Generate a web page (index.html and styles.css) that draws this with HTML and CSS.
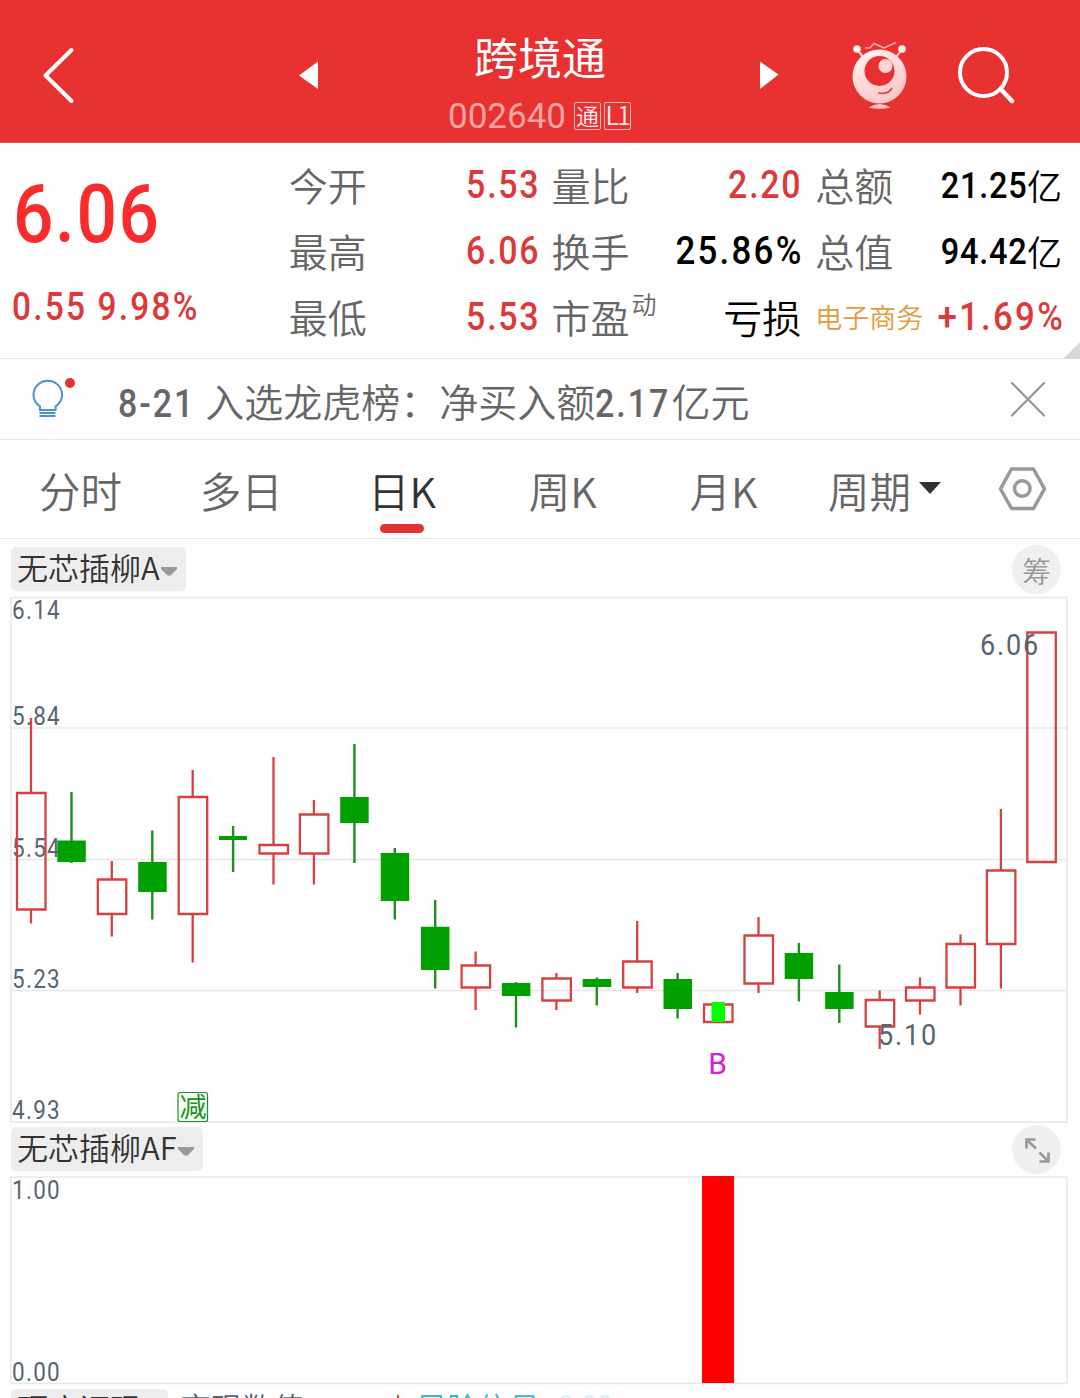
FILE: index.html
```html
<!DOCTYPE html>
<html lang="zh-CN">
<head>
<meta charset="utf-8">
<title>跨境通 002640</title>
<link rel="stylesheet" href="styles.css">
</head>
<body>
<div class="screen">
  <header class="topbar">
    <svg class="ico" width="48" height="72" viewBox="34 40 48 72"><path d="M71.500 50 45.500 75.500 71.500 101" fill="none" stroke="#fff" stroke-width="4" stroke-linecap="round" stroke-linejoin="round"/></svg>
    <svg class="ico prev" width="22" height="30" viewBox="298 60 22 30"><path d="M299 75.500 318 61.500V89z" fill="#fff"/></svg>
    <div class="stock">
      <h1 class="name">跨境通</h1>
      <div class="code"><span class="digits">002640</span><span class="badge">通</span><span class="badge latin">L1</span></div>
    </div>
    <svg class="ico next" width="22" height="30" viewBox="758 60 22 30"><path d="M778.500 74.500 760 61.500V89z" fill="#fff"/></svg>
    <svg class="ico robot" width="60" height="72" viewBox="850 39 60 72">
      <defs><linearGradient id="ball" x1="0" y1="0" x2=".7" y2="1"><stop offset="0" stop-color="#fff"/><stop offset=".45" stop-color="#ffdcdc"/><stop offset="1" stop-color="#ffc4c4"/></linearGradient></defs>
      <path d="M857 49.500 864 58M902 49.500 896 57" stroke="#ffd5d5" stroke-width="2"/>
      <circle cx="857" cy="49" r="3.800" fill="#fff0f0"/><circle cx="902" cy="49" r="3.800" fill="#fff0f0"/>
      <path d="M865 48h5l4-4.500 10 4.500 12-5.500" fill="none" stroke="#ffb0b0" stroke-width="1.500"/>
      <circle cx="879.500" cy="76.500" r="27" fill="url(#ball)"/>
      <circle cx="879.500" cy="71" r="15" fill="#e73131"/>
      <circle cx="885.500" cy="66" r="7" fill="#ffd4d4"/>
      <path d="M878 93q10 2 14-5" fill="none" stroke="#d9494c" stroke-width="1.700"/>
      <path d="M868.500 107.500q11-7 22 0-11 2.500-22 0z" fill="#ffc4c4"/>
    </svg>
    <svg class="ico search" width="62" height="62" viewBox="955 45 62 62"><circle cx="983.500" cy="72.500" r="23.500" fill="none" stroke="#fff" stroke-width="4"/><path d="M1001 89.500 1012 101" stroke="#fff" stroke-width="4.500" stroke-linecap="round"/></svg>
  </header>

  <section class="quote">
    <div class="price"><div class="last">6.06</div><div class="change">0.55 9.98%</div></div>
    <dl class="col open">
      <div><dt>今开</dt><dd class="up">5.53</dd></div>
      <div><dt>最高</dt><dd class="up">6.06</dd></div>
      <div><dt>最低</dt><dd class="up">5.53</dd></div>
    </dl>
    <dl class="col ratio">
      <div><dt>量比</dt><dd class="up">2.20</dd></div>
      <div><dt>换手</dt><dd class="percent">25.86%</dd></div>
      <div><dt>市盈<sup>动</sup></dt><dd class="han">亏损</dd></div>
    </dl>
    <dl class="col total">
      <div><dt>总额</dt><dd class="small"><span class="amount">21.25</span><span class="unit">亿</span></dd></div>
      <div><dt>总值</dt><dd class="small"><span class="amount">94.42</span><span class="unit">亿</span></dd></div>
      <div><dt class="sector">电子商务</dt><dd class="up percent">+1.69%</dd></div>
    </dl>
    <i class="corner"></i>
  </section>

  <section class="ticker">
    <svg class="bulb" width="46" height="44" viewBox="31 376 46 44">
      <path d="M40 410v-3.500c-4-3-6.500-6.500-6.500-11.500a14.300 14.300 0 0 1 28.600 0c0 5-2.500 8.500-6.500 11.500v3.500z" fill="none" stroke="#4d8fd6" stroke-width="2"/>
      <path d="M39.500 413h16M39.500 416h16" stroke="#4d8fd6" stroke-width="1.800"/>
      <circle cx="70" cy="383" r="5" fill="#e03535"/>
    </svg>
    <p class="news"><span>8-21</span> 入选龙虎榜：净买入额<span>2.17</span>亿元</p>
    <svg class="close" width="38" height="38" viewBox="1009 380 38 38"><path d="M1012 383l32 32.500M1044 383l-32 32.500" stroke="#999" stroke-width="2.300" stroke-linecap="round"/></svg>
  </section>

  <nav class="tabs">
    <a>分时</a><a>多日</a><a class="active">日K</a><a>周K</a><a>月K</a>
    <a class="more">周期<svg width="24" height="14" viewBox="0 0 24 14"><path d="M1 1h22L12 13z" fill="#333"/></svg></a>
    <svg class="gear" width="50" height="46" viewBox="997 466 50 46"><path d="M1011.500 469h22l11 19.800-11 19.700h-22l-11-19.700z" fill="none" stroke="#999" stroke-width="3.500" stroke-linejoin="round"/><circle cx="1022.300" cy="488.500" r="7.800" fill="none" stroke="#999" stroke-width="3.500"/></svg>
  </nav>

  <div class="bar">
    <button class="chip">无芯插柳A<svg width="18" height="11" viewBox="0 0 18 11"><path d="M1 1h16v2l-6 6q-2 1.500-4 0L1 3z" fill="#999"/></svg></button>
    <span class="round">筹</span>
  </div>
  <svg class="chart" width="1080" height="528" viewBox="0 596 1080 528">
    <g class="grid"><path d="M11 597.500H1067V1122H11zM11 728H1067M11 859.500H1067M11 990.500H1067"/></g>
    <g class="axis">
      <text x="12" y="619" textLength="49" lengthAdjust="spacingAndGlyphs">6.14</text><text x="12" y="725" textLength="49" lengthAdjust="spacingAndGlyphs">5.84</text><text x="12" y="857" textLength="49" lengthAdjust="spacingAndGlyphs">5.54</text><text x="12" y="988" textLength="49" lengthAdjust="spacingAndGlyphs">5.23</text><text x="12" y="1119" textLength="49" lengthAdjust="spacingAndGlyphs">4.93</text>
    </g>
    <path class="rise" d="M31 718V793M17 793h28.500V909.500h-28.500zM31 909.500V923.500
      M111.800 861V879.500M97.800 879.500h28.500V914h-28.500zM111.800 914V936.500
      M192.700 770V797M178.700 797h28.500V914h-28.500zM192.700 914V962.500
      M273.500 757V845M259.500 845h28.500V853.500h-28.500zM273.500 853.500V884.500
      M313.900 800V814.500M299.900 814.500h28.500V853.500h-28.500zM313.900 853.500V884.500
      M475.600 951.500V965.500M461.600 965.500h28.500V987.500h-28.500zM475.600 987.500V1010
      M556.400 973V978.500M542.400 978.500h28.500V1000.500h-28.500zM556.400 1000.500V1010
      M637.200 921V961.500M623.200 961.500h28.500V987.500h-28.500zM637.200 987.500V993
      M704 1004.500h28.500V1022h-28.500z
      M758.500 917V935.500M744.500 935.500h28.500V983.500h-28.500zM758.500 983.500V993
      M879.700 990.500V1000M865.700 1000h28.500V1026.500h-28.500zM879.700 1026.500V1049
      M920 977.500V987.500M906 987.500h28.500V1000.500h-28.500zM920 1000.500V1014.500
      M960.500 934.500V944M946.500 944h28.500V987.500h-28.500zM960.500 987.500V1005.500
      M1000.900 809V870.500M986.900 870.500h28.500V944h-28.500zM1000.900 944V988.500
      M1027.300 632.500h28.500V862h-28.500z"/>
    <path class="fall-wick" d="M71.500 792V863M152.300 830.500V919.500M233.100 826V872M354.400 744V863M394.800 848V919.500M435.200 900V988.500M516 982V1027.500M596.800 977.500V1005.500M677.600 973V1018.500M798.900 943V1001.500M839.300 964.500V1023"/>
    <path class="fall" d="M57.300 840.500h28.500V862h-28.500zM138.200 862h28.500V892h-28.500zM219 836h28V840h-28zM340.200 797h28.500V823h-28.500zM380.700 853h28.500V901h-28.500zM421 926.700h28.500V970h-28.500zM501.900 983h28.500V996h-28.500zM582.700 979h28.500V987h-28.500zM663.500 979h28.500V1009h-28.500zM784.700 953h28.500V979h-28.500zM825.100 992h28.500V1009h-28.500z"/>
    <rect x="711.500" y="1002" width="13.500" height="20" fill="#0f0"/>
    <g class="mark"><text x="980" y="655" textLength="60" lengthAdjust="spacingAndGlyphs">6.06</text><text x="878" y="1045" textLength="60" lengthAdjust="spacingAndGlyphs">5.10</text></g>
    <text class="buy" x="717.500" y="1074">B</text>
    <rect class="cut-box" x="178" y="1092.500" width="29.500" height="29" rx="2"/>
    <text class="cut" x="193" y="1117">减</text>
  </svg>
  <div class="bar second">
    <button class="chip">无芯插柳AF<svg width="18" height="11" viewBox="0 0 18 11"><path d="M1 1h16v2l-6 6q-2 1.500-4 0L1 3z" fill="#999"/></svg></button>
    <span class="round"><svg width="28" height="28" viewBox="1022 1135 28 28"><path d="M1034.500 1138.500h-9v9M1026 1139l9 8.500M1038.500 1160.500h9v-9M1047 1160l-8.500-8.500" fill="none" stroke="#999" stroke-width="2.700"/></svg></span>
  </div>
  <svg class="chart" width="1080" height="209" viewBox="0 1176 1080 209">
    <g class="grid"><path d="M11 1177H1067V1383.500H11z"/></g>
    <rect x="702" y="1176" width="32" height="207" fill="#f00"/>
    <g class="axis"><text x="12" y="1199" textLength="49" lengthAdjust="spacingAndGlyphs">1.00</text><text x="12" y="1381" textLength="49" lengthAdjust="spacingAndGlyphs">0.00</text></g>
  </svg>
  <footer class="third">
    <button class="chip">顶底证现</button><span class="metric">变现数值</span><i class="tick"></i><span class="risk">风险信号</span><span class="risk-value">0.00</span>
  </footer>
</div>
</body>
</html>
```
FILE: styles.css
```css
* { box-sizing: border-box; }
body {
  margin: 0;
  background: #fff;
  color: #666;
  font-family: "Noto Sans CJK SC", sans-serif;
  font-weight: 350;
}
h1, p, dl, dd { margin: 0; }
svg { display: block; flex: none; }
button { border: 0; font: inherit; }
.screen { width: 1080px; height: 1398px; overflow: hidden; background: #fefefe; }

/* header */
.topbar {
  height: 143px;
  display: flex;
  align-items: flex-start;
  padding: 40px 63px 0 34px;
  background: #e83131;
  border-bottom: 1px solid #c55;
}
.prev { margin: 20px 0 0 216px; }
.stock { width: 438px; margin-top: -40px; padding-left: 4px; text-align: center; color: #fff; }
.name { margin-top: 24px; font-size: 44px; line-height: 64px; font-weight: 400; }
.code { display: flex; justify-content: center; align-items: center; gap: 3px; height: 30px; margin-top: 13px; }
.digits { margin: 2px 5px 0 -1px; font: 400 35px/30px Roboto, sans-serif; color: #ffa5a5; }
.badge {
  width: 27px;
  height: 28px;
  border: 1px solid #ffb4b4;
  border-radius: 2px;
  font-size: 23px;
  line-height: 24px;
  color: #ffecec;
  display: flex;
  justify-content: center;
}
.latin { font-size: 25px; letter-spacing: -1.5px; line-height: 23px; }
.next { margin: 20px 0 0 2px; }
.robot { margin: -1px 0 0 70px; }
.search { margin: 5px 0 0 45px; }

/* quote panel */
.quote {
  position: relative;
  height: 216px;
  display: flex;
  padding: 10px 18px 0 13px;
  border-bottom: 1px solid #e8e8e8;
}
.price { width: 276px; }
.last, .change { transform: scaleX(.88); transform-origin: left; white-space: nowrap; }
.last { margin-top: 15px; font: 500 81px/94px Roboto, sans-serif; letter-spacing: 1.800px; color: #f82c2c; }
.change { margin: 22px 0 0 -1px; font: 500 38px/46px Roboto, sans-serif; letter-spacing: 2.500px; color: #dc3a3a; }
.col > div { display: flex; justify-content: space-between; height: 66px; align-items: center; }
.open { width: 250px; }
.ratio { width: 249px; margin-left: 13px; }
.total { width: 247px; margin-left: 15px; }
.col dt { font-size: 39px; line-height: 62px; padding-bottom: 4px; white-space: nowrap; }
.col dt sup { font-size: 25px; line-height: 0; vertical-align: 19px; margin-left: 2px; }
.col dd {
  font: 500 38.500px/62px Roboto, sans-serif;
  letter-spacing: 2px;
  margin-right: -2px;
  padding-bottom: 2px;
  color: #000;
  white-space: nowrap;
  transform: scaleX(.88);
  transform-origin: right;
}
.col dd.up { color: #dc3a3a; }
.col dd.percent { letter-spacing: 2.500px; margin-right: -3px; transform: scaleX(.905); }
.col dd.small { display: flex; align-items: center; font-size: 37px; letter-spacing: .8px; margin-right: 0; padding: 0; transform: none; }
.amount { transform: scaleX(.88); transform-origin: right; }
.unit { font: 350 35px/60px "Noto Sans CJK SC", sans-serif; letter-spacing: 0; padding-bottom: 3px; }
.col dd.han { font: 350 39px/62px "Noto Sans CJK SC", sans-serif; letter-spacing: 0; margin: 0 -1px 0 0; padding-bottom: 4px; transform: none; }
.col dt.sector { font-size: 27px; padding-bottom: 2px; color: #e29b3c; }
.corner {
  position: absolute;
  right: 0;
  bottom: -1px;
  border: solid transparent;
  border-width: 0 0 17px 17px;
  border-bottom-color: #d8d8d8;
}

/* news line */
.ticker { height: 81px; display: flex; align-items: center; padding: 0 33px 0 31px; border-bottom: 1px solid #e8e8e8; }
.bulb { margin-bottom: 2px; }
.news { flex: 1; margin-left: 41px; padding-top: 1px; font-size: 39px; line-height: 60px; white-space: nowrap; }
.news span {
  display: inline-block;
  margin-right: -9.300px;
  font: 500 38.500px/1 Roboto, sans-serif;
  letter-spacing: 2.300px;
  transform: scaleX(.88);
  transform-origin: left;
}

/* period tabs */
.tabs {
  height: 99px;
  display: grid;
  grid-template-columns: repeat(6, 160.800px) 1fr;
  border-bottom: 1px solid #e8e8e8;
}
.tabs a { position: relative; text-align: center; font-size: 41.500px; line-height: 100px; height: 97px; }
.tabs .active { color: #333; }
.tabs .active::after {
  content: "";
  position: absolute;
  left: 58px;
  bottom: 4px;
  width: 44px;
  height: 9px;
  border-radius: 5px;
  background: #e03434;
}
.tabs .more { display: flex; align-items: center; height: 100px; padding-left: 24px; gap: 7px; }
.tabs .more svg { margin-top: -4px; }
.gear { margin: 26px 0 0 32px; }

/* indicator bars */
.bar { height: 57px; display: flex; justify-content: space-between; padding: 6px 19px 0 11px; }
.bar.second { height: 52px; padding-top: 1px; }
.chip {
  height: 44px;
  display: flex;
  align-items: center;
  padding: 0 8px 4px 6px;
  border-radius: 5px;
  background: #ededed;
  color: #333;
  font-size: 31px;
  line-height: 40px;
}
.bar .chip { margin-top: 2px; }
.chip svg { margin: 8px 0 0; }
.round {
  width: 49px;
  height: 49px;
  border-radius: 50%;
  background: #efefef;
  color: #999;
  font-size: 29px;
  display: flex;
  align-items: center;
  justify-content: center;
}

/* charts */
.grid path { fill: none; stroke: #e7e7e7; stroke-width: 1.500; }
.axis text { font: 450 26px Roboto, sans-serif; letter-spacing: 1.500px; fill: #566570; }
.mark text { font: 450 30px Roboto, sans-serif; letter-spacing: 2px; fill: #566570; }
.rise { fill: none; stroke: #d34242; stroke-width: 2.300; }
.fall { fill: #00a000; }
.fall-wick { fill: none; stroke: #1f8f24; stroke-width: 2.400; }
.buy { font: 400 30px Roboto, sans-serif; fill: #d321d3; text-anchor: middle; }
.cut-box { fill: #f4fff4; stroke: #258a28; stroke-width: 1.200; }
.cut { font: 400 27px "Noto Sans CJK SC", sans-serif; fill: #1f8f24; text-anchor: middle; }

.third { display: flex; align-items: flex-start; height: 44px; margin-top: 4px; font-size: 31px; line-height: 36px; }
.third .chip { width: 157px; margin-left: 11px; padding-bottom: 6px; }
.metric { margin-left: 12px; color: #566570; }
.tick { width: 2px; height: 10px; margin: 6px 0 0 93px; background: #d34242; }
.risk { margin-left: 17px; color: #35b9c8; }
.risk-value { margin-left: 18px; color: #d8f2f4; font: 400 28px/34px Roboto, sans-serif; }
```
